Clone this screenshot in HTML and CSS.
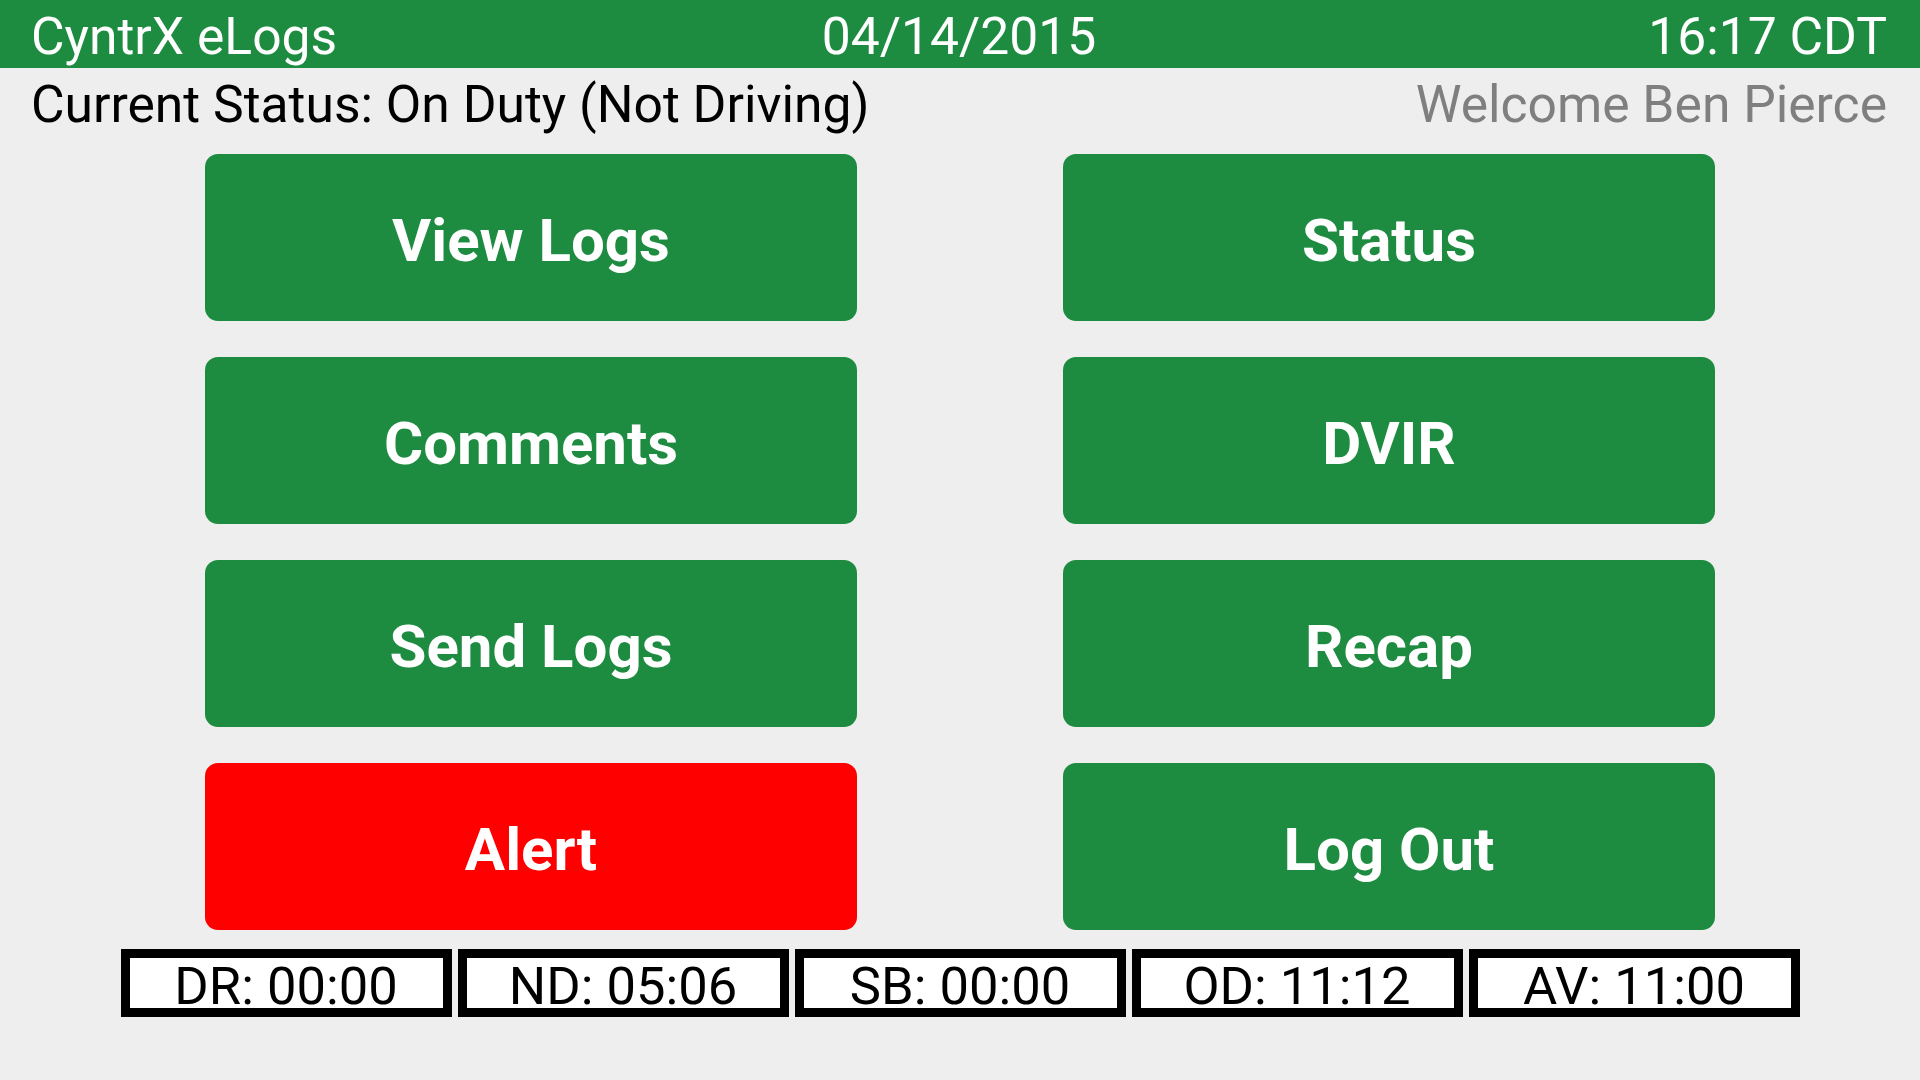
FILE: index.html
```html
<!DOCTYPE html>
<html lang="en">
<head>
  <meta charset="UTF-8" />
  <meta name="viewport" content="width=device-width, initial-scale=1.0"/>
  <title>CyntrX eLogs</title>
  <link rel="stylesheet" href="styles.css">
</head>
<body>
  <header class="top-bar">
    <span class="app-name">CyntrX eLogs</span>
    <span class="date">04/14/2015</span>
    <span class="time">16:17 CDT</span>
  </header>

  <div class="status-row">
    <span class="current-status">Current Status: On Duty (Not Driving)</span>
    <span class="welcome">Welcome Ben Pierce</span>
  </div>

  <main class="menu">
    <button type="button" class="menu-btn">View Logs</button>
    <button type="button" class="menu-btn">Status</button>
    <button type="button" class="menu-btn">Comments</button>
    <button type="button" class="menu-btn">DVIR</button>
    <button type="button" class="menu-btn">Send Logs</button>
    <button type="button" class="menu-btn">Recap</button>
    <button type="button" class="menu-btn alert">Alert</button>
    <button type="button" class="menu-btn">Log Out</button>
  </main>

  <div class="hours">
    <div class="hours-box">DR: 00:00</div>
    <div class="hours-box">ND: 05:06</div>
    <div class="hours-box">SB: 00:00</div>
    <div class="hours-box">OD: 11:12</div>
    <div class="hours-box">AV: 11:00</div>
  </div>
</body>
</html>
```

FILE: styles.css
```css
* {
  box-sizing: border-box;
}

body {
  margin: 0;
  background-color: #eeeeef;
  font-family: Roboto, "Liberation Sans", sans-serif;
  font-size: 51.6px;
  color: #000;
}

.top-bar {
  display: grid;
  grid-template-columns: 1fr auto 1fr;
  height: 68px;
  padding: 6px 33px 0 31px;
  line-height: 62px;
  background-color: #1e8c40;
  color: #fff;
}

.top-bar .time {
  justify-self: end;
}

.status-row {
  display: flex;
  justify-content: space-between;
  margin-top: 6px;
  padding: 0 33px 0 31px;
  line-height: 61px;
}

.welcome {
  color: #7f7f7f;
}

.menu {
  display: grid;
  grid-template-columns: 652px 652px;
  grid-auto-rows: 167px;
  justify-content: center;
  column-gap: 206px;
  row-gap: 36px;
  margin-top: 19px;
}

.menu-btn {
  padding: 5px 0 0;
  border: none;
  border-radius: 13px;
  background-color: #1e8c40;
  color: #fff;
  font-family: Roboto, "Liberation Sans", sans-serif;
  font-size: 60px;
  font-weight: bold;
  cursor: pointer;
}

.menu-btn.alert {
  background-color: #ff0000;
}

.hours {
  display: flex;
  justify-content: center;
  gap: 6px;
  margin-top: 19px;
}

.hours-box {
  width: 331px;
  height: 68px;
  padding-top: 3px;
  border: 9px solid #000;
  background-color: #fff;
  text-align: center;
  font-size: 52.5px;
  line-height: 50px;
}
```
